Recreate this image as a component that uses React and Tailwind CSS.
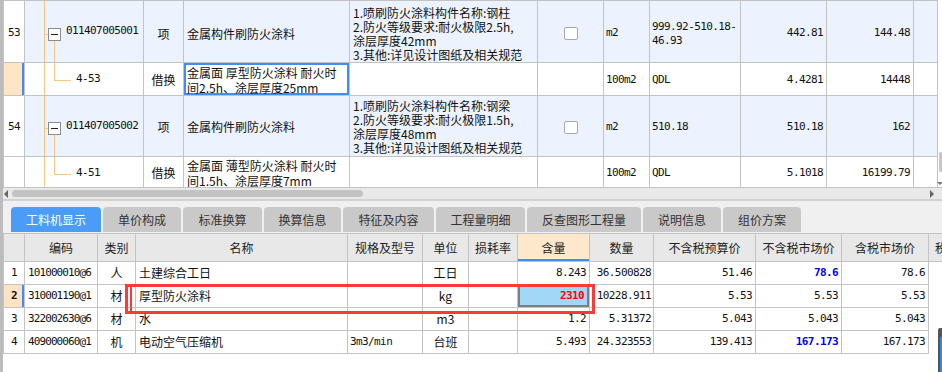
const CJK = "font-['Noto_Sans_CJK_SC',sans-serif]";
const NUM = "font-['DejaVu_Sans_Mono','Noto_Sans_CJK_SC',monospace] text-[11px] tracking-[-0.6px]";
const B = "border border-[#c3c3c3] p-0 align-middle";
const LINE = "absolute bg-[#f8c585]";

function ParentTree({ code, lineTop, boxTop, stemTop }) {
  return (
    <td className={`${B} relative`}>
      <div className={`${LINE} left-[19px] top-0 bottom-0 w-px`} />
      <div className={`${LINE} left-[19px] w-[4px] h-px ${lineTop}`} />
      <div className={`absolute left-[23px] w-[13px] h-[13px] border border-[#8c8c8c] bg-white flex items-center justify-center ${boxTop}`}>
        <div className="w-[7px] h-px bg-[#222]" />
      </div>
      <div className={`${LINE} left-[29px] bottom-0 w-px ${stemTop}`} />
      <div className={`pl-[41px] ${NUM}`}>{code}</div>
    </td>
  );
}

function ChildTree({ code }) {
  return (
    <td className={`${B} relative`}>
      <div className={`${LINE} left-[19px] top-0 bottom-0 w-px`} />
      <div className={`${LINE} left-[29px] top-0 h-[17px] w-px`} />
      <div className={`${LINE} left-[29px] top-[17px] w-[17px] h-px`} />
      <div className={`pl-[51px] ${NUM}`}>{code}</div>
    </td>
  );
}

function Check() {
  return <div className="mx-auto w-[14px] h-[13px] border border-[#a8a8a8] rounded-[2px] bg-white" />;
}

function TopGrid() {
  const widths = ["w-[21px]", "w-[119px]", "w-[40px]", "w-[166px]", "w-[188px]", "w-[66px]", "w-[46px]", "w-[91px]", "w-[86px]", "w-[87px]", "w-[24px]"];
  return (
    <div className="flex h-[187px] overflow-hidden">
      <table className="table-fixed border-collapse w-[934px] shrink-0">
        <colgroup>
          {widths.map((w, i) => <col key={i} className={w} />)}
        </colgroup>
        <tbody>
          <tr className="h-[62px] bg-[#ecf3fe]">
            <td className={`${B} bg-white text-center pt-[4px] ${NUM}`}>53</td>
            <ParentTree code="011407005001" lineTop="top-[33px]" boxTop="top-[27px]" stemTop="top-[40px]" />
            <td className={`${B} text-center pt-[4px]`}>项</td>
            <td className={`${B} pl-[3px] pt-[4px]`}>金属构件刷防火涂料</td>
            <td className={`${B} pl-[3px] pt-[4px] leading-[14px]`}>
              <div>1.喷刷防火涂料构件名称:钢柱</div>
              <div>2.防火等级要求:耐火极限2.5h,</div>
              <div>涂层厚度42mm</div>
              <div>3.其他:详见设计图纸及相关规范</div>
            </td>
            <td className={`${B} pt-[4px]`}><Check /></td>
            <td className={`${B} pl-[2px] pt-[4px] ${NUM}`}>m2</td>
            <td className={`${B} pl-[2px] pt-[4px] leading-[14px] ${NUM}`}>
              <div>999.92-510.18-</div>
              <div>46.93</div>
            </td>
            <td className={`${B} text-right pr-[3px] pt-[4px] ${NUM}`}>442.81</td>
            <td className={`${B} text-right pr-[3px] pt-[4px] ${NUM}`}>144.48</td>
            <td className={B} />
          </tr>
          <tr className="h-[33px] bg-white">
            <td className={`${B} bg-[#fde5c6] shadow-[inset_-2px_0_0_#3f8ff2]`} />
            <ChildTree code="4-53" />
            <td className={`${B} text-center pt-[2px]`}>借换</td>
            <td className={`${B} pl-[3px] pt-[1px] leading-[15px] shadow-[inset_0_0_0_2px_#3f8ff2]`}>
              <div>金属面 厚型防火涂料 耐火时</div>
              <div>间2.5h、涂层厚度25mm</div>
            </td>
            <td className={B} />
            <td className={B} />
            <td className={`${B} pl-[2px] pt-[2px] ${NUM}`}>100m2</td>
            <td className={`${B} pl-[2px] pt-[2px] ${NUM}`}>QDL</td>
            <td className={`${B} text-right pr-[3px] pt-[2px] ${NUM}`}>4.4281</td>
            <td className={`${B} text-right pr-[3px] pt-[2px] ${NUM}`}>14448</td>
            <td className={B} />
          </tr>
          <tr className="h-[61px] bg-[#ecf3fe]">
            <td className={`${B} bg-white text-center pt-[2px] ${NUM}`}>54</td>
            <ParentTree code="011407005002" lineTop="top-[32px]" boxTop="top-[26px]" stemTop="top-[39px]" />
            <td className={`${B} text-center pt-[2px]`}>项</td>
            <td className={`${B} pl-[3px] pt-[2px]`}>金属构件刷防火涂料</td>
            <td className={`${B} pl-[3px] pt-[2px] leading-[14px]`}>
              <div>1.喷刷防火涂料构件名称:钢梁</div>
              <div>2.防火等级要求:耐火极限1.5h,</div>
              <div>涂层厚度48mm</div>
              <div>3.其他:详见设计图纸及相关规范</div>
            </td>
            <td className={`${B} pt-[2px]`}><Check /></td>
            <td className={`${B} pl-[2px] pt-[2px] ${NUM}`}>m2</td>
            <td className={`${B} pl-[2px] pt-[2px] ${NUM}`}>510.18</td>
            <td className={`${B} text-right pr-[3px] pt-[2px] ${NUM}`}>510.18</td>
            <td className={`${B} text-right pr-[3px] pt-[2px] ${NUM}`}>162</td>
            <td className={B} />
          </tr>
          <tr className="h-[33px] bg-white">
            <td className={B} />
            <ChildTree code="4-51" />
            <td className={`${B} text-center`}>借换</td>
            <td className={`${B} pl-[3px] leading-[15px]`}>
              <div>金属面 薄型防火涂料 耐火时</div>
              <div>间1.5h、涂层厚度7mm</div>
            </td>
            <td className={B} />
            <td className={B} />
            <td className={`${B} pl-[2px] ${NUM}`}>100m2</td>
            <td className={`${B} pl-[2px] ${NUM}`}>QDL</td>
            <td className={`${B} text-right pr-[3px] ${NUM}`}>5.1018</td>
            <td className={`${B} text-right pr-[3px] ${NUM}`}>16199.79</td>
            <td className={B} />
          </tr>
        </tbody>
      </table>
      <div className="w-[5px] flex flex-col items-end bg-white">
        <div className="h-[152px]" />
        <div className="h-[20px] w-[4px] bg-[#c6c6c6] rounded-l-[2px]" />
        <div className="h-[10px]" />
        <div className="w-0 h-0 border-x-[3px] border-x-transparent border-t-[3px] border-t-[#777]" />
      </div>
    </div>
  );
}

function HScroll() {
  return (
    <div className="h-[14px] border-t border-[#c3c3c3] border-b-2 border-b-[#d2d2d2] bg-[#e9e9e9] flex items-center">
      <div className="ml-[1px] w-0 h-0 border-y-[4px] border-y-transparent border-r-[4px] border-r-[#666]" />
      <div className="ml-[4px] w-[351px] h-[7px] rounded-full bg-[#c3c3c3]" />
      <div className="flex-1" />
      <div className="mr-[8px] w-0 h-0 border-y-[4px] border-y-transparent border-l-[4px] border-l-[#666]" />
    </div>
  );
}

function Tabs() {
  const tabs = [
    { t: "工料机显示", w: "w-[90px]", on: true },
    { t: "单价构成", w: "w-[78px]" },
    { t: "标准换算", w: "w-[79px]" },
    { t: "换算信息", w: "w-[77px]" },
    { t: "特征及内容", w: "w-[91px]" },
    { t: "工程量明细", w: "w-[89px]" },
    { t: "反查图形工程量", w: "w-[114px]" },
    { t: "说明信息", w: "w-[78px]" },
    { t: "组价方案", w: "w-[78px]" },
  ];
  return (
    <div className="h-[32px] bg-[#f0f0f0] flex items-end pl-[8px] pb-[1px] gap-[2px]">
      {tabs.map(({ t, w, on }) => (
        <div
          key={t}
          className={`${w} h-[25px] rounded-t-[4px] flex items-center justify-center text-[12px] ${on ? "bg-[#4a9cf7] text-white" : "bg-[#c9c9c9] text-[#333]"}`}
        >
          {t}
        </div>
      ))}
    </div>
  );
}

const rows = [
  { n: "1", code: "101000010@6", type: "人", name: "土建综合工日", spec: "", unit: "工日", qty: "8.243", amt: "36.500828", p1: "51.46", p2: "78.6", p2b: true, p3: "78.6" },
  { n: "2", code: "310001190@1", type: "材", name: "厚型防火涂料", spec: "", unit: "kg", qty: "2310", amt: "10228.911", p1: "5.53", p2: "5.53", p3: "5.53", sel: true },
  { n: "3", code: "322002630@6", type: "材", name: "水", spec: "", unit: "m3", qty: "1.2", amt: "5.31372", p1: "5.043", p2: "5.043", p3: "5.043" },
  { n: "4", code: "409000060@1", type: "机", name: "电动空气压缩机", spec: "3m3/min", unit: "台班", qty: "5.493", amt: "24.323553", p1: "139.413", p2: "167.173", p2b: true, p3: "167.173" },
];

function BottomGrid() {
  const widths = ["w-[21px]", "w-[73px]", "w-[38px]", "w-[212px]", "w-[75px]", "w-[46px]", "w-[49px]", "w-[72px]", "w-[64px]", "w-[102px]", "w-[86px]", "w-[87px]", "w-[60px]"];
  const heads = ["", "编码", "类别", "名称", "规格及型号", "单位", "损耗率"];
  const H = "border border-[#c3c3c3] font-normal text-center text-[#222] align-middle p-0";
  return (
    <div className="relative h-[139px] overflow-hidden bg-white">
      <table className="table-fixed border-collapse w-[985px]">
        <colgroup>
          {widths.map((w, i) => <col key={i} className={w} />)}
        </colgroup>
        <thead>
          <tr className="h-[28px] bg-[#e8e8e8]">
            {heads.map((h, i) => <th key={i} className={H}>{h}</th>)}
            <th className={`${H} bg-[#fde8cc] font-bold shadow-[inset_0_-2px_0_#3d8ef0]`}>含量</th>
            <th className={H}>数量</th>
            <th className={H}>不含税预算价</th>
            <th className={H}>不含税市场价</th>
            <th className={H}>含税市场价</th>
            <th className={`${H} text-left pl-[6px]`}>税率</th>
          </tr>
        </thead>
        <tbody>
          {rows.map((r) => (
            <tr key={r.n} className="h-[23px]">
              <td className={`${B} text-center ${NUM} ${r.sel ? "bg-[#fde3c3] font-bold shadow-[inset_-2px_0_0_#3f8ff2]" : ""}`}>{r.n}</td>
              <td className={`${B} pl-[3px] ${NUM} tracking-[-0.9px]`}>{r.code}</td>
              <td className={`${B} text-center`}>{r.type}</td>
              <td className={`${B} pl-[3px]`}>{r.name}</td>
              <td className={`${B} pl-[2px] ${NUM}`}>{r.spec}</td>
              <td className={`${B} text-center`}>{r.unit}</td>
              <td className={B} />
              {r.sel ? (
                <td className={`${B} text-right pr-[5px] bg-[#a2d7f8] shadow-[inset_0_0_0_2px_#7f7f7f] text-[#ff0000] font-bold ${NUM}`}>{r.qty}</td>
              ) : (
                <td className={`${B} text-right pr-[3px] ${NUM}`}>{r.qty}</td>
              )}
              <td className={`${B} text-right pr-[2px] ${NUM}`}>{r.amt}</td>
              <td className={`${B} text-right pr-[3px] ${NUM}`}>{r.p1}</td>
              <td className={`${B} text-right pr-[3px] ${NUM} ${r.p2b ? "text-[#0000ff] font-bold" : ""}`}>{r.p2}</td>
              <td className={`${B} text-right pr-[3px] ${NUM}`}>{r.p3}</td>
              <td className="border-l border-[#c3c3c3]" />
            </tr>
          ))}
        </tbody>
      </table>
      <div className="absolute left-[122px] top-[51px] w-[470px] h-[30px] border-[3px] border-[#ff3838] pointer-events-none" />
      <div className="absolute left-[127px] top-[54px] w-[2px] h-[24px] bg-[#ff3838]" />
      <div className="absolute left-[935px] top-[95px] w-[4px] h-[44px] bg-[#555] rounded-tl-[2px]">
        <div className="ml-[2px] mt-[9px] h-[35px] bg-[#2b8be6]" />
      </div>
    </div>
  );
}

export default function App() {
  return (
    <div className={`w-[942px] h-[372px] overflow-hidden bg-white border-l-[3px] border-[#bcbcbc] text-[12px] text-[#111] ${CJK}`}>
      <TopGrid />
      <HScroll />
      <Tabs />
      <BottomGrid />
    </div>
  );
}
